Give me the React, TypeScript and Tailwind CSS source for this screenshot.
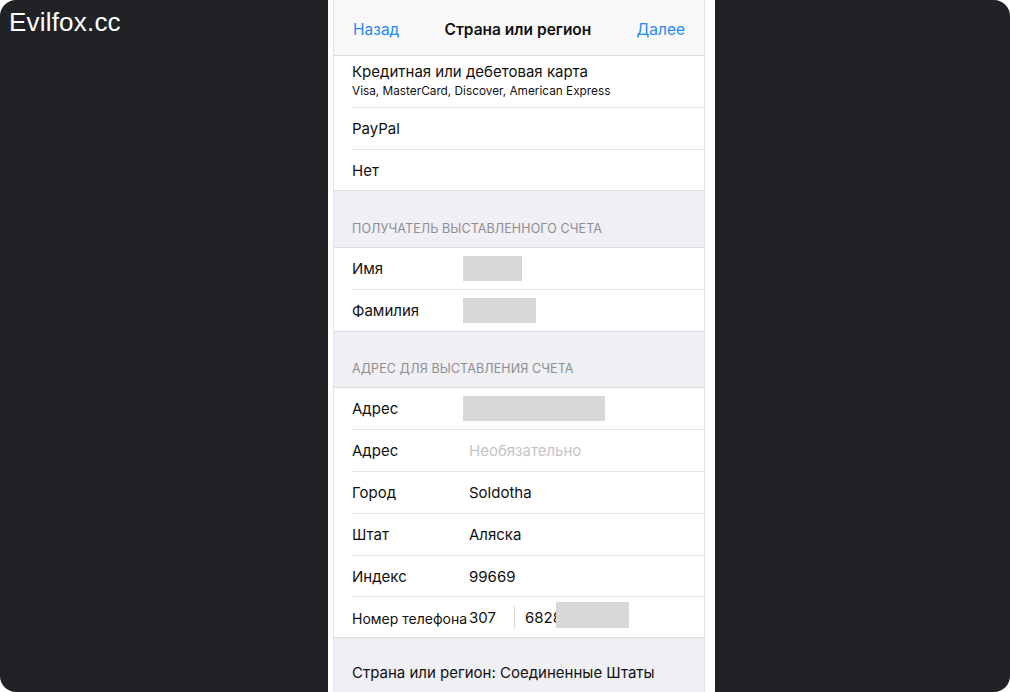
const FONT = "font-['Inter','Noto_Sans',sans-serif]";

function Row({
  label,
  children,
  last = false,
  h = 'h-[42px]',
  small = false,
}: {
  label: string;
  children?: React.ReactNode;
  last?: boolean;
  h?: string;
  small?: boolean;
}) {
  return (
    <div className={`${h} flex shrink-0 ${last ? 'border-b border-[#dcdce0]' : ''}`}>
      <div className={`flex items-center flex-1 ml-[18px] pt-[2px] ${last ? '' : 'border-b border-[#e4e4e8]'}`}>
        <div className={`w-[117px] shrink-0 whitespace-nowrap text-[#111] ${small ? 'text-[14px]' : 'text-[15px]'}`}>
          {label}
        </div>
        {children}
      </div>
    </div>
  );
}

function Redacted({ w }: { w: string }) {
  return <div className={`${w} h-[25px] -ml-[6px] -mt-[2px] bg-[#d8d8d8]`} />;
}

function Section({ title, h }: { title: string; h: string }) {
  return (
    <div className={`${h} shrink-0 bg-[#efeff4] border-b border-[#dcdce0] flex items-end pb-[8px] pl-[18px]`}>
      <span className="text-[12.5px] text-[#8e8e93] tracking-[0.1px]">{title}</span>
    </div>
  );
}

export default function App() {
  return (
    <div className={`w-[1010px] h-[692px] bg-white ${FONT}`}>
      <div className="relative w-full h-full rounded-2xl bg-[#212226] overflow-hidden flex pl-[328px]">
        <div className="absolute left-[9px] top-[3px] text-white text-[26px] font-['Liberation_Sans',sans-serif] tracking-[0.2px]">
          Evilfox.cc
        </div>

        <div className="w-[387px] h-full bg-white pl-[5px] pr-[10px]">
          <div className="h-full flex flex-col border-x border-[#e3e3e6] overflow-hidden">
            {/* Nav bar */}
            <div className="h-[56px] shrink-0 bg-[#f8f8f8] border-b border-[#dcdce0] flex items-center justify-between px-[19px] pt-[4px]">
              <span className="text-[15.5px] text-[#2589f0]">Назад</span>
              <span className="text-[15.5px] font-semibold text-[#111]">Страна или регион</span>
              <span className="text-[15.5px] text-[#2589f0]">Далее</span>
            </div>

            {/* Payment options */}
            <div className="h-[52px] shrink-0 flex">
              <div className="flex-1 ml-[18px] border-b border-[#e4e4e8] flex flex-col justify-center pb-[2px]">
                <span className="text-[15px] text-[#111] leading-[20px]">Кредитная или дебетовая карта</span>
                <span className="text-[11.8px] text-[#111] leading-[16px] mt-[1px]">
                  Visa, MasterCard, Discover, American Express
                </span>
              </div>
            </div>
            <Row label="PayPal" />
            <Row label="Нет" last h="h-[41px]" />

            <Section title="ПОЛУЧАТЕЛЬ ВЫСТАВЛЕННОГО СЧЕТА" h="h-[57px]" />
            <Row label="Имя">
              <Redacted w="w-[59px]" />
            </Row>
            <Row label="Фамилия" last>
              <Redacted w="w-[73px]" />
            </Row>

            <Section title="АДРЕС ДЛЯ ВЫСТАВЛЕНИЯ СЧЕТА" h="h-[56px]" />
            <Row label="Адрес">
              <Redacted w="w-[142px]" />
            </Row>
            <Row label="Адрес">
              <span className="text-[15px] text-[#c4c4c8]">Необязательно</span>
            </Row>
            <Row label="Город">
              <span className="text-[15px] text-[#111]">Soldotha</span>
            </Row>
            <Row label="Штат">
              <span className="text-[15px] text-[#111]">Аляска</span>
            </Row>
            <Row label="Индекс" h="h-[41px]">
              <span className="text-[15px] text-[#111]">99669</span>
            </Row>
            <Row label="Номер телефона" last h="h-[41px]" small>
              <span className="w-[45px] text-[15px] text-[#111]">307</span>
              <div className="w-px h-[23px] -mt-[2px] bg-[#dcdce0] mr-[10px]" />
              <span className="relative text-[15px] text-[#111]">
                6828
                <span className="absolute left-[31px] top-[-5px] w-[73px] h-[26px] bg-[#d8d8d8]" />
              </span>
            </Row>

            <div className="flex-1 bg-[#efeff4] pl-[18px] pt-[22px]">
              <span className="text-[15px] text-[#111]">Страна или регион: Соединенные Штаты</span>
            </div>
          </div>
        </div>
      </div>
    </div>
  );
}
